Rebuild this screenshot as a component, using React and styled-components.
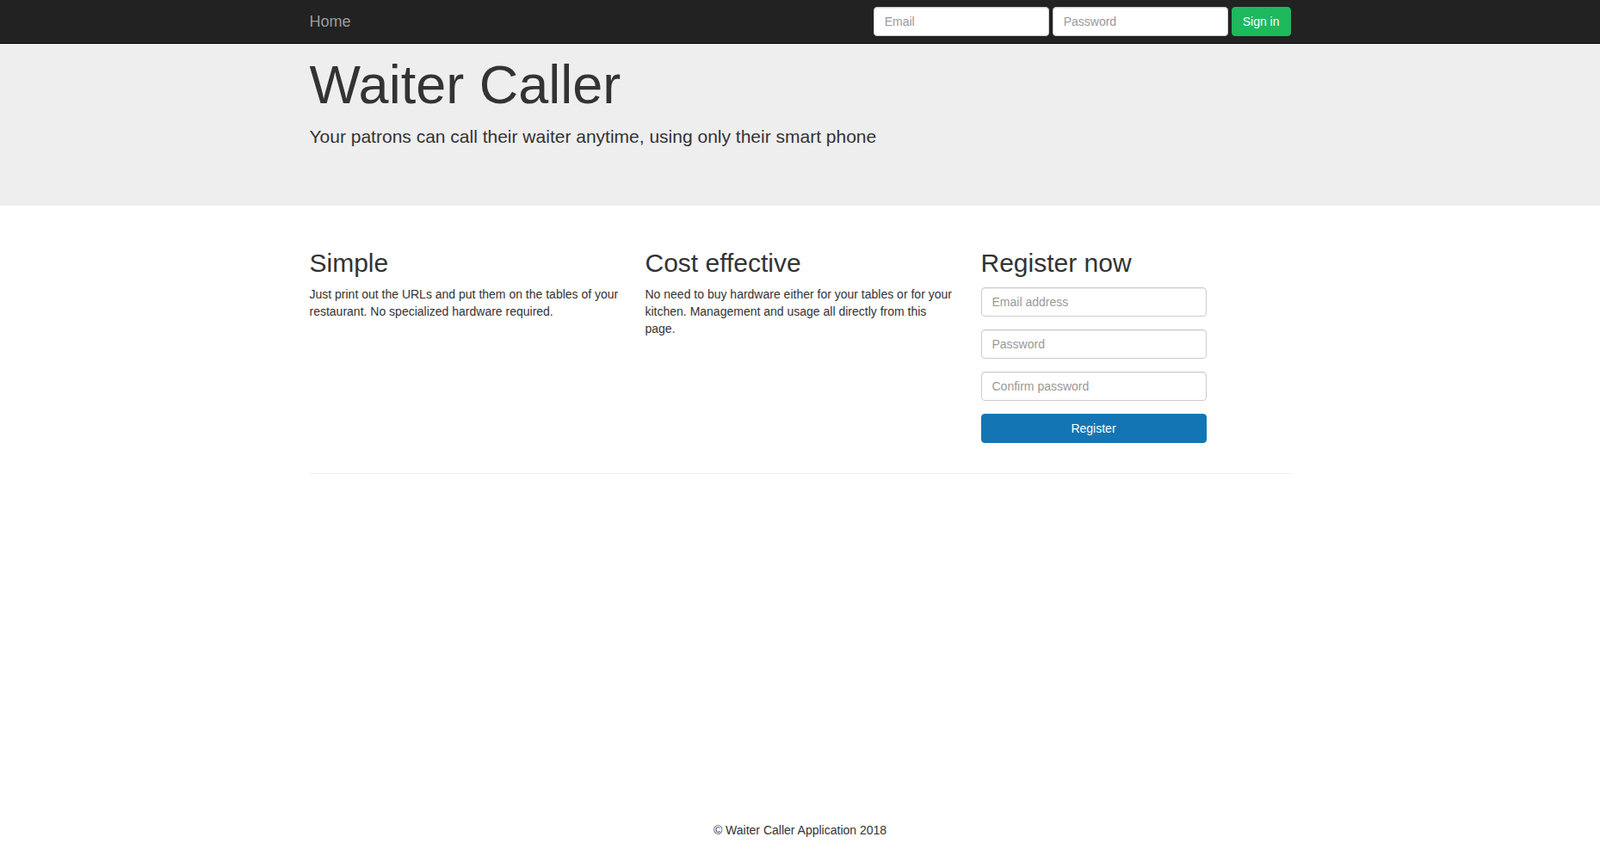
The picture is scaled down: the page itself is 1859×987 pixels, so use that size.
import React from 'react';
import styled, { createGlobalStyle } from 'styled-components';

// Base page styles
const GlobalStyle = createGlobalStyle`
  *, *::before, *::after {
    box-sizing: border-box;
  }

  html, body {
    margin: 0;
    padding: 0;
  }

  body {
    font-family: 'Liberation Sans', Arial, Helvetica, sans-serif;
    font-size: 14px;
    line-height: 1.42857143;
    color: #333333;
    background: #ffffff;
  }
`;

const Page = styled.div`
  min-height: 100vh;
  display: flex;
  flex-direction: column;
`;

const Container = styled.div`
  width: 1170px;
  margin: 0 auto;
  padding: 0 15px;
`;

// Barra superior
const Navbar = styled.nav`
  background: #222222;
  border-bottom: 1px solid #080808;
`;

const NavInner = styled(Container)`
  display: flex;
  justify-content: space-between;
  align-items: flex-start;
  height: 50px;
`;

const Brand = styled.a`
  font-size: 18px;
  line-height: 20px;
  padding: 15px 0;
  color: #9d9d9d;
  text-decoration: none;
  cursor: pointer;

  &:hover {
    color: #ffffff;
  }
`;

const NavForm = styled.form`
  display: flex;
  gap: 4px;
  margin-top: 8px;
`;

const Input = styled.input`
  display: block;
  width: ${({ width }) => width || '100%'};
  height: 34px;
  padding: 6px 12px;
  font-family: inherit;
  font-size: 14px;
  line-height: 1.42857143;
  color: #555555;
  background: #ffffff;
  border: 1px solid #cccccc;
  border-radius: 4px;
  box-shadow: inset 0 1px 1px rgba(0, 0, 0, 0.075);
  outline: none;

  &::placeholder {
    color: #999999;
  }
`;

const Button = styled.button`
  display: block;
  width: ${({ block }) => (block ? '100%' : 'auto')};
  height: 34px;
  padding: 6px 12px;
  font-family: inherit;
  font-size: 14px;
  line-height: 1.42857143;
  color: #ffffff;
  background: ${({ color }) => color};
  border: 1px solid ${({ color }) => color};
  border-radius: 4px;
  cursor: pointer;
`;

// Jumbotron
const Jumbotron = styled.section`
  background: #eeeeee;
  padding: 12.5px 0 50px;
`;

const Title = styled.h1`
  margin: 0 0 11px;
  font-size: 63px;
  line-height: 1.1;
  font-weight: 500;
`;

const Lead = styled.p`
  margin: 0 0 15px;
  font-size: 21px;
  line-height: 30px;
  font-weight: 200;
`;

// Colunas
const Main = styled(Container)`
  padding-top: 30px;
`;

const Row = styled.div`
  display: grid;
  grid-template-columns: repeat(3, 1fr);
  column-gap: 30px;
`;

const Column = styled.div``;

const Heading = styled.h2`
  margin: 20px 0 10px;
  font-size: 30px;
  line-height: 1.1;
  font-weight: 500;
`;

const Text = styled.p`
  margin: 0 0 10px;
`;

const RegisterForm = styled.form`
  width: 262px;
  padding-top: 2px;
`;

const FormGroup = styled.div`
  margin-bottom: 15px;
`;

const Divider = styled.hr`
  margin: 20px 0;
  border: 0;
  border-top: 1px solid #eeeeee;
`;

// Rodapé
const Footer = styled.footer`
  margin-top: auto;
  padding-bottom: 12px;
`;

const FooterText = styled.p`
  margin: 0;
  text-align: center;
`;

const App = () => {
  const stop = (e) => e.preventDefault();

  return (
    <Page>
      <GlobalStyle />

      <Navbar>
        <NavInner>
          <Brand href="#">Home</Brand>
          <NavForm onSubmit={stop}>
            <Input type="text" placeholder="Email" width="204px" />
            <Input type="password" placeholder="Password" width="204px" />
            <Button type="submit" color="#1eb85d">Sign in</Button>
          </NavForm>
        </NavInner>
      </Navbar>

      <Jumbotron>
        <Container>
          <Title>Waiter Caller</Title>
          <Lead>Your patrons can call their waiter anytime, using only their smart phone</Lead>
        </Container>
      </Jumbotron>

      <Main>
        <Row>
          <Column>
            <Heading>Simple</Heading>
            <Text>
              Just print out the URLs and put them on the tables of your restaurant. No specialized
              hardware required.
            </Text>
          </Column>
          <Column>
            <Heading>Cost effective</Heading>
            <Text>
              No need to buy hardware either for your tables or for your kitchen. Management and
              usage all directly from this page.
            </Text>
          </Column>
          <Column>
            <Heading>Register now</Heading>
            <RegisterForm onSubmit={stop}>
              <FormGroup>
                <Input type="email" placeholder="Email address" />
              </FormGroup>
              <FormGroup>
                <Input type="password" placeholder="Password" />
              </FormGroup>
              <FormGroup>
                <Input type="password" placeholder="Confirm password" />
              </FormGroup>
              <FormGroup>
                <Button type="submit" color="#1475b5" block>Register</Button>
              </FormGroup>
            </RegisterForm>
          </Column>
        </Row>
        <Divider />
      </Main>

      <Footer>
        <FooterText>&copy; Waiter Caller Application 2018</FooterText>
      </Footer>
    </Page>
  );
};

export default App;
